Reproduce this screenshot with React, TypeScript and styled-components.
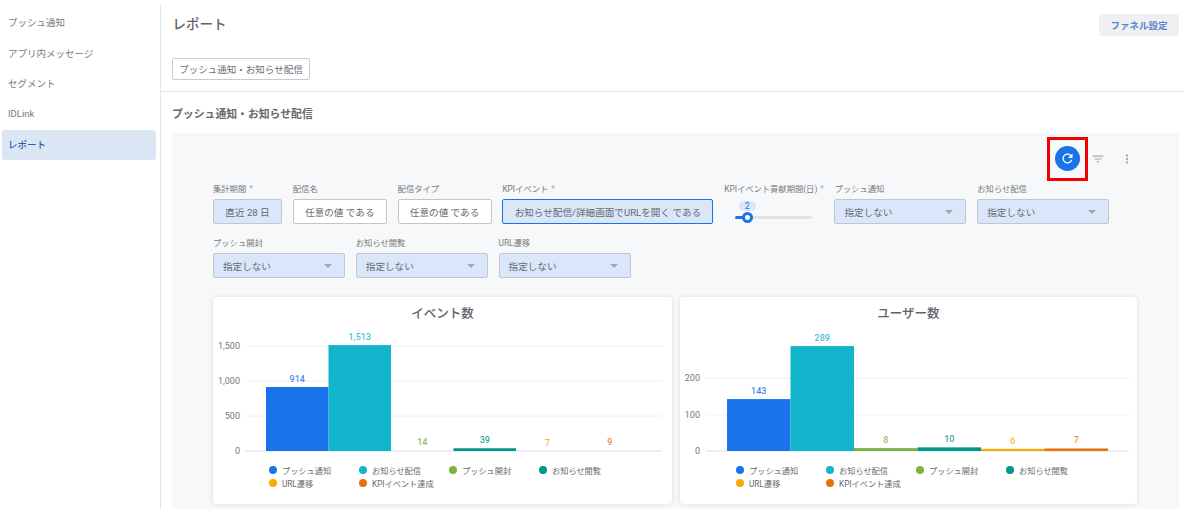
import React from "react";
import styled, { createGlobalStyle } from "styled-components";
import { MdRefresh, MdFilterList, MdMoreVert } from "react-icons/md";

const GlobalStyle = createGlobalStyle`
  html, body {
    margin: 0;
    padding: 0;
    background: #fff;
    font-family: Roboto, "Noto Sans CJK JP", sans-serif;
  }
  * { box-sizing: border-box; }
`;

const COLORS = {
  blue: "#1a73e8",
  cyan: "#12b5cb",
  green: "#7cb342",
  teal: "#009688",
  amber: "#f9ab00",
  orange: "#e8710a",
};

const LEGEND = [
  { label: "プッシュ通知", color: COLORS.blue },
  { label: "お知らせ配信", color: COLORS.cyan },
  { label: "プッシュ開封", color: COLORS.green },
  { label: "お知らせ閲覧", color: COLORS.teal },
  { label: "URL遷移", color: COLORS.amber },
  { label: "KPIイベント達成", color: COLORS.orange },
];

const Page = styled.div`
  display: flex;
  width: 1184px;
  height: 509px;
  overflow: hidden;
`;

const Sidebar = styled.nav`
  width: 161px;
  flex: none;
  margin-top: 4px;
  padding: 4px 4px 0 2px;
  border-right: 1px solid #e3e5e8;
`;

const NavItem = styled.div<{ $active?: boolean }>`
  height: 30.4px;
  padding: 0 0 1.5px 6px;
  display: flex;
  align-items: center;
  font-size: 9.5px;
  border-radius: 3px;
  color: ${(p) => (p.$active ? "#2a5fa8" : "#75787c")};
  background: ${(p) => (p.$active ? "#dae6f3" : "transparent")};
  font-weight: ${(p) => (p.$active ? 500 : 400)};
`;

const Main = styled.main`
  flex: 1;
  min-width: 0;
  display: flex;
  flex-direction: column;

  & > * {
    flex: none;
  }
`;

const Header = styled.header`
  height: 44px;
  padding: 14px 5px 0 11.5px;
  display: flex;
  justify-content: space-between;
  align-items: flex-start;
`;

const PageTitle = styled.h1`
  margin: 0;
  line-height: 20px;
  font-size: 13.5px;
  font-weight: 500;
  color: #5f6266;
`;

const FunnelButton = styled.button`
  width: 80px;
  height: 22px;
  padding: 0;
  border: 0;
  border-radius: 3px;
  background: #eff0f1;
  color: #5c85d0;
  font: 700 9.5px Roboto, "Noto Sans CJK JP", sans-serif;
`;

const TabBar = styled.div`
  height: 48px;
  padding: 14px 0 0 11px;
  border-bottom: 1px solid #e3e5e8;
`;

const Tab = styled.div`
  width: 138px;
  height: 22px;
  display: flex;
  align-items: center;
  justify-content: center;
  border: 1px solid #c9cbce;
  border-radius: 2px;
  font-size: 9.5px;
  color: #6d7074;
`;

const Section = styled.section`
  padding: 0 5px 0 11px;
`;

const SectionTitle = styled.h2`
  margin: 0;
  height: 41px;
  display: flex;
  align-items: center;
  font-size: 10.85px;
  font-weight: 700;
  color: #66696d;
`;

const Panel = styled.div`
  height: 400px;
  padding: 0 0 0 41px;
  background: #f7f8fa;
`;

const Toolbar = styled.div`
  position: relative;
  height: 50px;
  display: flex;
  align-items: flex-start;
  padding-top: 13px;
  padding-left: 842px;
  gap: 6px;
`;

const RefreshButton = styled.div`
  width: 25px;
  height: 25px;
  border-radius: 50%;
  background: ${COLORS.blue};
  color: #fff;
  display: flex;
  align-items: center;
  justify-content: center;
  font-size: 15px;
`;

const ToolIcon = styled.div`
  width: 23px;
  height: 25px;
  color: #a4a7ab;
  display: flex;
  align-items: center;
  justify-content: center;
  font-size: 14px;
`;

const Highlight = styled.div`
  position: absolute;
  left: 834px;
  top: 4px;
  width: 41px;
  height: 44px;
  border: 3.5px solid #f00000;
`;

const Filters = styled.div`
  display: flex;
  flex-wrap: wrap;
  column-gap: 10.8px;
  row-gap: 13px;
  width: 900px;
`;

const Field = styled.div<{ $width: number }>`
  width: ${(p) => p.$width}px;
`;

const FieldLabel = styled.div`
  height: 16px;
  line-height: 12px;
  font-size: 8.3px;
  color: #75787c;
  white-space: nowrap;
`;

const Required = styled.span`
  margin-left: 3px;
  color: #a4a7ab;
`;

const Control = styled.div<{ $tone?: "plain" | "tint" | "active"; $select?: boolean }>`
  height: 25px;
  display: flex;
  align-items: center;
  justify-content: ${(p) => (p.$select ? "space-between" : "center")};
  padding: ${(p) => (p.$select ? "0 12px 0 9px" : "0")};
  border-radius: 2px;
  font-size: 9.6px;
  white-space: nowrap;
  color: #66696d;
  background: ${(p) => (p.$tone === "plain" ? "#fff" : "#dae7fb")};
  border: 1px solid ${(p) => (p.$tone === "active" ? COLORS.blue : "#c3c6cb")};
`;

const Caret = styled.span`
  width: 0;
  height: 0;
  border-left: 4px solid transparent;
  border-right: 4px solid transparent;
  border-top: 4px solid #a4a8ae;
`;

const SliderBox = styled.div`
  position: relative;
  height: 25px;
`;

const SliderTrack = styled.div`
  position: absolute;
  left: 11px;
  top: 17px;
  width: 77px;
  height: 3px;
  border-radius: 2px;
  background: #e2e3e5;
`;

const SliderFill = styled.div`
  width: 12px;
  height: 3px;
  border-radius: 2px;
  background: ${COLORS.blue};
`;

const SliderThumb = styled.div`
  position: absolute;
  left: 18px;
  top: 13px;
  width: 11px;
  height: 11px;
  border-radius: 50%;
  background: #fff;
  border: 3px solid ${COLORS.blue};
`;

const SliderBubble = styled.div`
  position: absolute;
  left: 14.5px;
  top: 2px;
  width: 17px;
  height: 10px;
  border-radius: 6px;
  background: #dae7fb;
  color: ${COLORS.blue};
  font-size: 9px;
  line-height: 10px;
  text-align: center;
`;

const Cards = styled.div`
  display: grid;
  grid-template-columns: 459px 457px;
  column-gap: 8px;
  margin-top: 19px;
`;

const Card = styled.div`
  height: 207px;
  background: #fff;
  border-radius: 4px;
  box-shadow: 0 0 4px rgba(60, 64, 67, 0.16);
`;

const CardTitle = styled.div`
  height: 32px;
  padding-bottom: 2px;
  display: flex;
  align-items: center;
  justify-content: center;
  font-size: 12.5px;
  font-weight: 500;
  color: #5f6266;
`;

const Plot = styled.svg`
  display: block;
  height: 134px;
  font-family: Roboto, "Noto Sans CJK JP", sans-serif;
`;

const Legend = styled.div`
  display: grid;
  grid-template-columns: repeat(4, 90px);
  grid-auto-rows: 13px;
  padding-left: 56px;
`;

const LegendItem = styled.div`
  display: flex;
  align-items: center;
  gap: 5px;
  font-size: 8.2px;
  color: #66696d;
  white-space: nowrap;
`;

const Dot = styled.span<{ $color: string }>`
  width: 8px;
  height: 8px;
  border-radius: 50%;
  flex: none;
  background: ${(p) => p.$color};
`;

type ChartProps = {
  width: number;
  axisEnd: number;
  gridStart: number;
  barStart: number;
  barStep: number;
  scale: number;
  ticks: { label: string; value: number }[];
  values: number[];
};

const ZERO_Y = 122;

function BarChart({ width, axisEnd, gridStart, barStart, barStep, scale, ticks, values }: ChartProps) {
  const colors = LEGEND.map((l) => l.color);
  return (
    <Plot width={width} viewBox={`0 0 ${width} 134`}>
      {ticks.map((t) => {
        const y = ZERO_Y - t.value * scale;
        return (
          <g key={t.label}>
            <line x1={gridStart} x2={449} y1={y} y2={y} stroke={t.value === 0 ? "#d8dff0" : "#eef0f5"} />
            <text x={axisEnd} y={y + 3} textAnchor="end" fontSize="9" fill="#75787c">
              {t.label}
            </text>
          </g>
        );
      })}
      {values.map((v, i) => {
        const h = v * scale;
        const x = barStart + i * barStep;
        return (
          <g key={i}>
            {h > 1.5 && <rect x={x} y={ZERO_Y - h} width={barStep} height={h} fill={colors[i]} />}
            <text
              x={x + barStep / 2}
              y={ZERO_Y - h - 5}
              textAnchor="middle"
              fontSize="9"
              fontWeight="500"
              fillOpacity="0.85"
              fill={colors[i]}
            >
              {v.toLocaleString("en-US")}
            </text>
          </g>
        );
      })}
    </Plot>
  );
}

function ChartLegend() {
  return (
    <Legend>
      {LEGEND.map((l) => (
        <LegendItem key={l.label}>
          <Dot $color={l.color} />
          {l.label}
        </LegendItem>
      ))}
    </Legend>
  );
}

const NAV = ["プッシュ通知", "アプリ内メッセージ", "セグメント", "IDLink", "レポート"];

export default function App() {
  return (
    <Page>
      <GlobalStyle />
      <Sidebar>
        {NAV.map((n) => (
          <NavItem key={n} $active={n === "レポート"}>
            {n}
          </NavItem>
        ))}
      </Sidebar>
      <Main>
        <Header>
          <PageTitle>レポート</PageTitle>
          <FunnelButton>ファネル設定</FunnelButton>
        </Header>
        <TabBar>
          <Tab>プッシュ通知・お知らせ配信</Tab>
        </TabBar>
        <Section>
          <SectionTitle>プッシュ通知・お知らせ配信</SectionTitle>
          <Panel>
            <Toolbar>
              <RefreshButton>
                <MdRefresh />
              </RefreshButton>
              <ToolIcon>
                <MdFilterList />
              </ToolIcon>
              <ToolIcon>
                <MdMoreVert />
              </ToolIcon>
              <Highlight />
            </Toolbar>
            <Filters>
              <Field $width={69}>
                <FieldLabel>
                  集計期間<Required>*</Required>
                </FieldLabel>
                <Control>直近 28 日</Control>
              </Field>
              <Field $width={94}>
                <FieldLabel>配信名</FieldLabel>
                <Control $tone="plain">任意の値 である</Control>
              </Field>
              <Field $width={94}>
                <FieldLabel>配信タイプ</FieldLabel>
                <Control $tone="plain">任意の値 である</Control>
              </Field>
              <Field $width={211}>
                <FieldLabel>
                  KPIイベント<Required>*</Required>
                </FieldLabel>
                <Control $tone="active">お知らせ配信/詳細画面でURLを開く である</Control>
              </Field>
              <Field $width={99.5}>
                <FieldLabel>
                  KPIイベント貢献期間(日)<Required>*</Required>
                </FieldLabel>
                <SliderBox>
                  <SliderTrack>
                    <SliderFill />
                  </SliderTrack>
                  <SliderBubble>2</SliderBubble>
                  <SliderThumb />
                </SliderBox>
              </Field>
              {["プッシュ通知", "お知らせ配信", "プッシュ開封", "お知らせ閲覧", "URL遷移"].map((label) => (
                <Field $width={132} key={label}>
                  <FieldLabel>{label}</FieldLabel>
                  <Control $select>
                    指定しない
                    <Caret />
                  </Control>
                </Field>
              ))}
            </Filters>
            <Cards>
              <Card>
                <CardTitle>イベント数</CardTitle>
                <BarChart
                  width={459}
                  axisEnd={27}
                  gridStart={32}
                  barStart={53}
                  barStep={62.5}
                  scale={0.07}
                  ticks={[
                    { label: "0", value: 0 },
                    { label: "500", value: 500 },
                    { label: "1,000", value: 1000 },
                    { label: "1,500", value: 1500 },
                  ]}
                  values={[914, 1513, 14, 39, 7, 9]}
                />
                <ChartLegend />
              </Card>
              <Card>
                <CardTitle>ユーザー数</CardTitle>
                <BarChart
                  width={457}
                  axisEnd={20}
                  gridStart={26}
                  barStart={47}
                  barStep={63.5}
                  scale={0.363}
                  ticks={[
                    { label: "0", value: 0 },
                    { label: "100", value: 100 },
                    { label: "200", value: 200 },
                  ]}
                  values={[143, 289, 8, 10, 6, 7]}
                />
                <ChartLegend />
              </Card>
            </Cards>
          </Panel>
        </Section>
      </Main>
    </Page>
  );
}
